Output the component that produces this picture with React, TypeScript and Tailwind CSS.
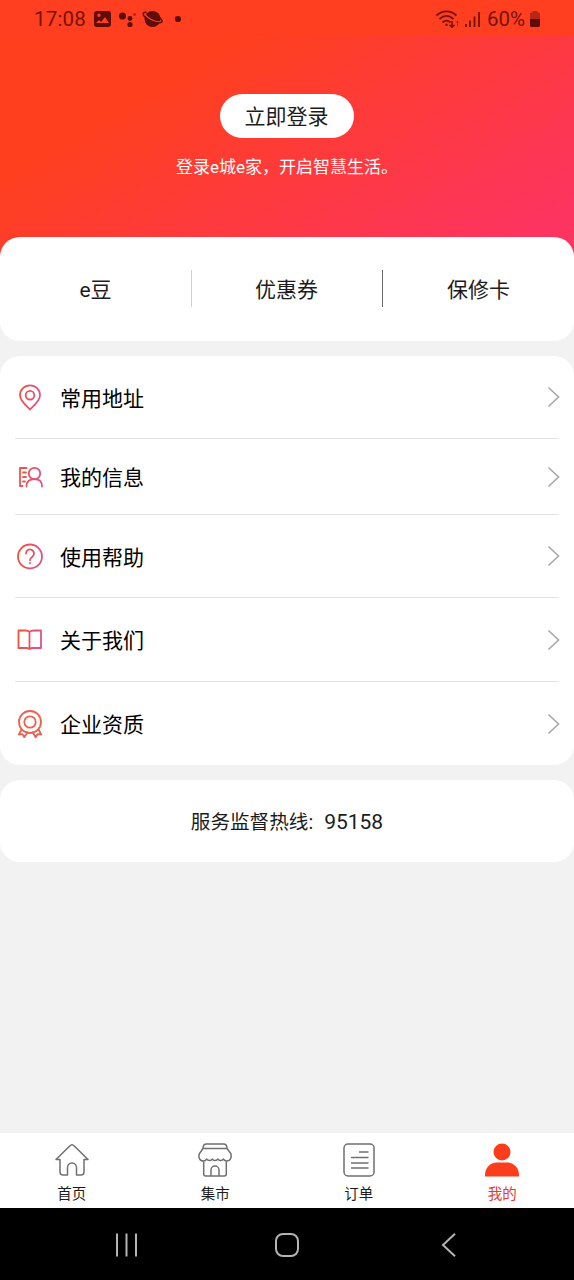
import type { ReactNode } from "react";

const Gradient = ({ id }: { id: string }) => (
  <defs>
    <linearGradient id={id} x1="2" y1="8" x2="26" y2="14" gradientUnits="userSpaceOnUse">
      <stop offset="0" stopColor="#f0523a" />
      <stop offset="1" stopColor="#e0528c" />
    </linearGradient>
  </defs>
);

const MenuIcon = ({ id, children }: { id: string; children: ReactNode }) => (
  <svg
    width="28"
    height="28"
    viewBox="0 0 28 28"
    fill="none"
    stroke={`url(#${id})`}
    strokeWidth="1.8"
    strokeLinejoin="round"
    strokeLinecap="round"
  >
    <Gradient id={id} />
    {children}
  </svg>
);

const menu = [
  {
    label: "常用地址",
    className: "h-[83px]",
    icon: (
      <MenuIcon id="address">
        <path d="M14 26.500C10.500 23 4 18 4 12.300a10 10 0 0 1 20 0C24 18 17.500 23 14 26.500Z" />
        <circle cx="14" cy="12.200" r="4.300" />
      </MenuIcon>
    ),
  },
  {
    label: "我的信息",
    className: "h-[76px]",
    icon: (
      <MenuIcon id="info">
        <path d="M10.500 5H4v18h2.500M7 9.500h3M7 14h3M7 18.500h2" />
        <circle cx="18.500" cy="10.500" r="5.700" />
        <path d="M10.500 23.500c0-4.500 3-7.300 8-7.300s7.500 2.800 7.500 7.300" />
      </MenuIcon>
    ),
  },
  {
    label: "使用帮助",
    className: "h-[83px]",
    icon: (
      <MenuIcon id="help">
        <circle cx="14" cy="14.500" r="12" />
        <path d="M10 11.500a4 4 0 1 1 6.600 3c-1.700 1.300-2.600 2-2.600 3.700M14 21v.4" />
      </MenuIcon>
    ),
  },
  {
    label: "关于我们",
    className: "h-[84px]",
    icon: (
      <MenuIcon id="about">
        <path d="M13.500 6C12.500 4.800 11.500 4.500 9.500 4.500h-7V22h7.500c1.700 0 2.700.3 3.500 1 .8-.7 1.800-1 3.500-1h8V4.500H18c-2 0-3.500.3-4.500 1.500ZM13.500 6v17" />
      </MenuIcon>
    ),
  },
  {
    label: "企业资质",
    className: "h-[83px]",
    icon: (
      <MenuIcon id="license">
        <g stroke="#ea6250">
          <circle cx="14" cy="12" r="11" />
          <circle cx="14" cy="12" r="5.700" />
          <path d="M5.500 19.500 2.800 24.500l3.700-.3 1.800 3 3-4.700M22.500 19.500l2.700 5-3.700-.3-1.800 3-3-4.700" />
        </g>
      </MenuIcon>
    ),
  },
];

const tabs = [
  {
    label: "首页",
    icon: (
      <path d="M17 1.700c1 0 1.500.5 2.500 1.500L33 16.500h-4V29a3 3 0 0 1-3 3h-4.500v-7.500a4.500 4.500 0 0 0-9 0V32H8a3 3 0 0 1-3-3V16.500H1L14.500 3.200c1-1 1.500-1.500 2.500-1.500Z" />
    ),
  },
  {
    label: "集市",
    icon: (
      <>
        <path d="M5 5.500c0-3 1.500-4.500 3.500-4.500h17c2 0 3.500 1.500 3.500 4.500Z" />
        <path d="M5 5.500 1.500 10.500c-1.500 3.500 0 7.500 4 7.500 1.500 0 2.500-.8 3.300-2 1 2 4.700 2 5.500 0 1 2 4.500 2 5.500 0 1 2 4.700 2 5.500 0 .8 1.200 2 2 3.500 2 4 0 5-4 4-7.500L29 5.500" />
        <path d="M5.700 18.500v12.500a2 2 0 0 0 2 2h18.600a2 2 0 0 0 2-2V18.500M13 33v-6a4 4 0 0 1 8 0v6" />
      </>
    ),
  },
  {
    label: "订单",
    icon: (
      <>
        <rect x="2" y="1" width="30" height="32" rx="4" />
        <path d="M17 9h9.500M9 14.500h17.500M9 20h17.500M9 25h17.500" strokeWidth="1.700" />
      </>
    ),
  },
  {
    label: "我的",
    active: true,
    icon: (
      <>
        <circle cx="17" cy="9" r="8.500" />
        <path d="M0 33.500V32C0 25 5 19.500 12 19.500h10c7 0 12 5.500 12 12.500v1.500Z" />
      </>
    ),
  },
];

const StatusBar = () => (
  <div className="flex h-[36px] items-center bg-[#ff3f1f] pt-[3px] pl-[34px] pr-[33px] font-[Roboto] text-[20.500px] text-[#761208]">
    <span className="w-[59px] tracking-[0.2px]">17:08</span>
    <svg className="mb-0.5" width="91" height="20" viewBox="93 9 91 20" fill="#5e0d08">
      <path fillRule="evenodd" d="M97 11h11a3 3 0 0 1 3 3v10a3 3 0 0 1-3 3H97a3 3 0 0 1-3-3V14a3 3 0 0 1 3-3Zm-1 12h13l-4-6-4 5-2-2Zm3-9.500a1.700 1.700 0 1 0 0 3.400 1.700 1.700 0 0 0 0-3.400Z" />
      <circle cx="122.500" cy="16" r="3.600" />
      <circle cx="130" cy="18.500" r="2.400" />
      <circle cx="130" cy="24.500" r="2.600" />
      <circle cx="134.500" cy="14.500" r="1.300" opacity=".6" />
      <circle cx="152.500" cy="19" r="8" />
      <path d="M144.500 13c2 5 9 9 16 9" fill="none" stroke="#ff4020" strokeWidth="1.300" />
      <path d="M146.500 12.500c-4-.7-4.500 2-1 5 4 3.300 10 5.500 14 5.300 4-.2 3-3 0-5.300" fill="none" stroke="#5e0d08" strokeWidth="1.500" />
      <circle cx="178" cy="19" r="3.100" />
    </svg>
    <svg className="mb-0.5 ml-auto" width="48" height="22" viewBox="435 8 48 22" fill="none" stroke="#761208" strokeWidth="1.800">
      <path d="M436.500 15.500c6-5.500 14-5.500 20 0M439.500 19c4.300-4 9.700-4 14 0M442.500 22.500c2.500-2.300 5.500-2.300 8 0" />
      <circle cx="446.500" cy="24.800" r="1.200" fill="#761208" stroke="none" />
      <path d="M452 21v6M449.500 24.800l2.500 2.500 2.500-2.500" strokeWidth="1.500" />
      <path d="M457.500 26v-5M455.800 22.700l1.700-1.700 1.700 1.700" strokeWidth="1" opacity=".5" />
      <path d="M466 27v-3M470 27v-6.500M474.500 27V16.500M479 27V12" />
    </svg>
    <span className="ml-1 w-[39px]">60%</span>
    <svg className="mb-px ml-[3px]" width="12" height="18" viewBox="0 0 12 18" fill="#5e0d08">
      <path d="M3.500 1h5v1.500h1A1.500 1.500 0 0 1 11 4v5H1V4a1.500 1.500 0 0 1 1.500-1.500h1Z" opacity=".45" />
      <path d="M1 9h10v6.500A1.500 1.500 0 0 1 9.500 17h-7A1.500 1.500 0 0 1 1 15.500Z" />
    </svg>
  </div>
);

export default function App() {
  return (
    <div className="flex h-[1280px] w-[574px] flex-col overflow-hidden bg-[#f2f2f2] font-[Roboto,'Noto_Sans_CJK_SC',sans-serif] text-[21px] text-[#1c1c1c]">
      <header className="flex h-[256px] shrink-0 flex-col">
        <StatusBar />
        <div className="flex flex-1 flex-col items-center bg-[linear-gradient(150deg,#ff3f1d_25%,#fc345f_90%)] pt-[58px]">
          <button className="h-[44px] w-[134px] rounded-full bg-white pt-[3px] pr-px">立即登录</button>
          <p className="mt-[15px] text-[17px] leading-[28px] text-white">登录e城e家，开启智慧生活。</p>
        </div>
      </header>
      <main className="-mt-[19px] flex flex-1 flex-col gap-[15px]">
        <section className="flex h-[104px] items-center rounded-[20px] bg-white">
          <div className="w-[191px] pt-[4px] text-center">e豆</div>
          <div className="mb-0.5 h-[37px] w-px bg-[#cfcfcf]" />
          <div className="w-[190px] pt-[4px] pr-px text-center">优惠券</div>
          <div className="mb-0.5 h-[37px] w-px bg-[#666]" />
          <div className="w-[191px] pt-[4px] text-center">保修卡</div>
        </section>
        <section className="flex h-[409px] flex-col rounded-[20px] bg-white px-[15px] text-black">
          {menu.map(({ label, className, icon }) => (
            <div
              key={label}
              className={`${className} flex shrink-0 items-center border-b border-[#e2e2e2] last:border-b-0`}
            >
              <div className="ml-px">{icon}</div>
              <span className="ml-4 pt-[5px]">{label}</span>
              <svg className="-mr-px ml-auto" width="13" height="22" viewBox="0 0 13 22" fill="none" stroke="#aaa" strokeWidth="1.700">
                <path d="m1.500 1.500 10 9.500-10 9.500" />
              </svg>
            </div>
          ))}
        </section>
        <section className="flex h-[82px] items-center justify-center rounded-[20px] bg-white pt-1">
          <span className="text-[19.600px]">服务监督热线:</span>
          <span className="ml-[11px]">95158</span>
        </section>
      </main>
      <nav className="flex h-[75px] shrink-0 bg-white">
        {tabs.map(({ label, icon, active }) => (
          <div
            key={label}
            className={`flex flex-1 flex-col items-center pt-2.5 text-[14.500px] ${
              active ? "text-[#e0402a]" : "text-[#1c1c1c]"
            }`}
          >
            <svg
              width="34"
              height="35"
              viewBox="0 0 34 35"
              fill={active ? "#fc3d1c" : "none"}
              stroke={active ? "none" : "#707070"}
              strokeWidth="1.500"
              strokeLinejoin="round"
            >
              {icon}
            </svg>
            <span className="mt-[7px] leading-5">{label}</span>
          </div>
        ))}
      </nav>
      <footer className="flex h-[72px] shrink-0 items-center bg-black pt-px pl-[114px]">
        <svg width="24" height="24" viewBox="0 0 24 24" stroke="#b4b4b4" strokeWidth="2">
          <path d="M3 .5v23M12.500.5v23M22 .5v23" />
        </svg>
        <svg className="ml-[136px]" width="25" height="24" viewBox="0 0 25 24" fill="none" stroke="#b4b4b4" strokeWidth="2">
          <rect x="2" y="1" width="22" height="22" rx="7" />
        </svg>
        <svg className="ml-[142px]" width="16" height="24" viewBox="0 0 16 24" fill="none" stroke="#b4b4b4" strokeWidth="2">
          <path d="M14 .8 2 12l12 11.200" />
        </svg>
      </footer>
    </div>
  );
}
